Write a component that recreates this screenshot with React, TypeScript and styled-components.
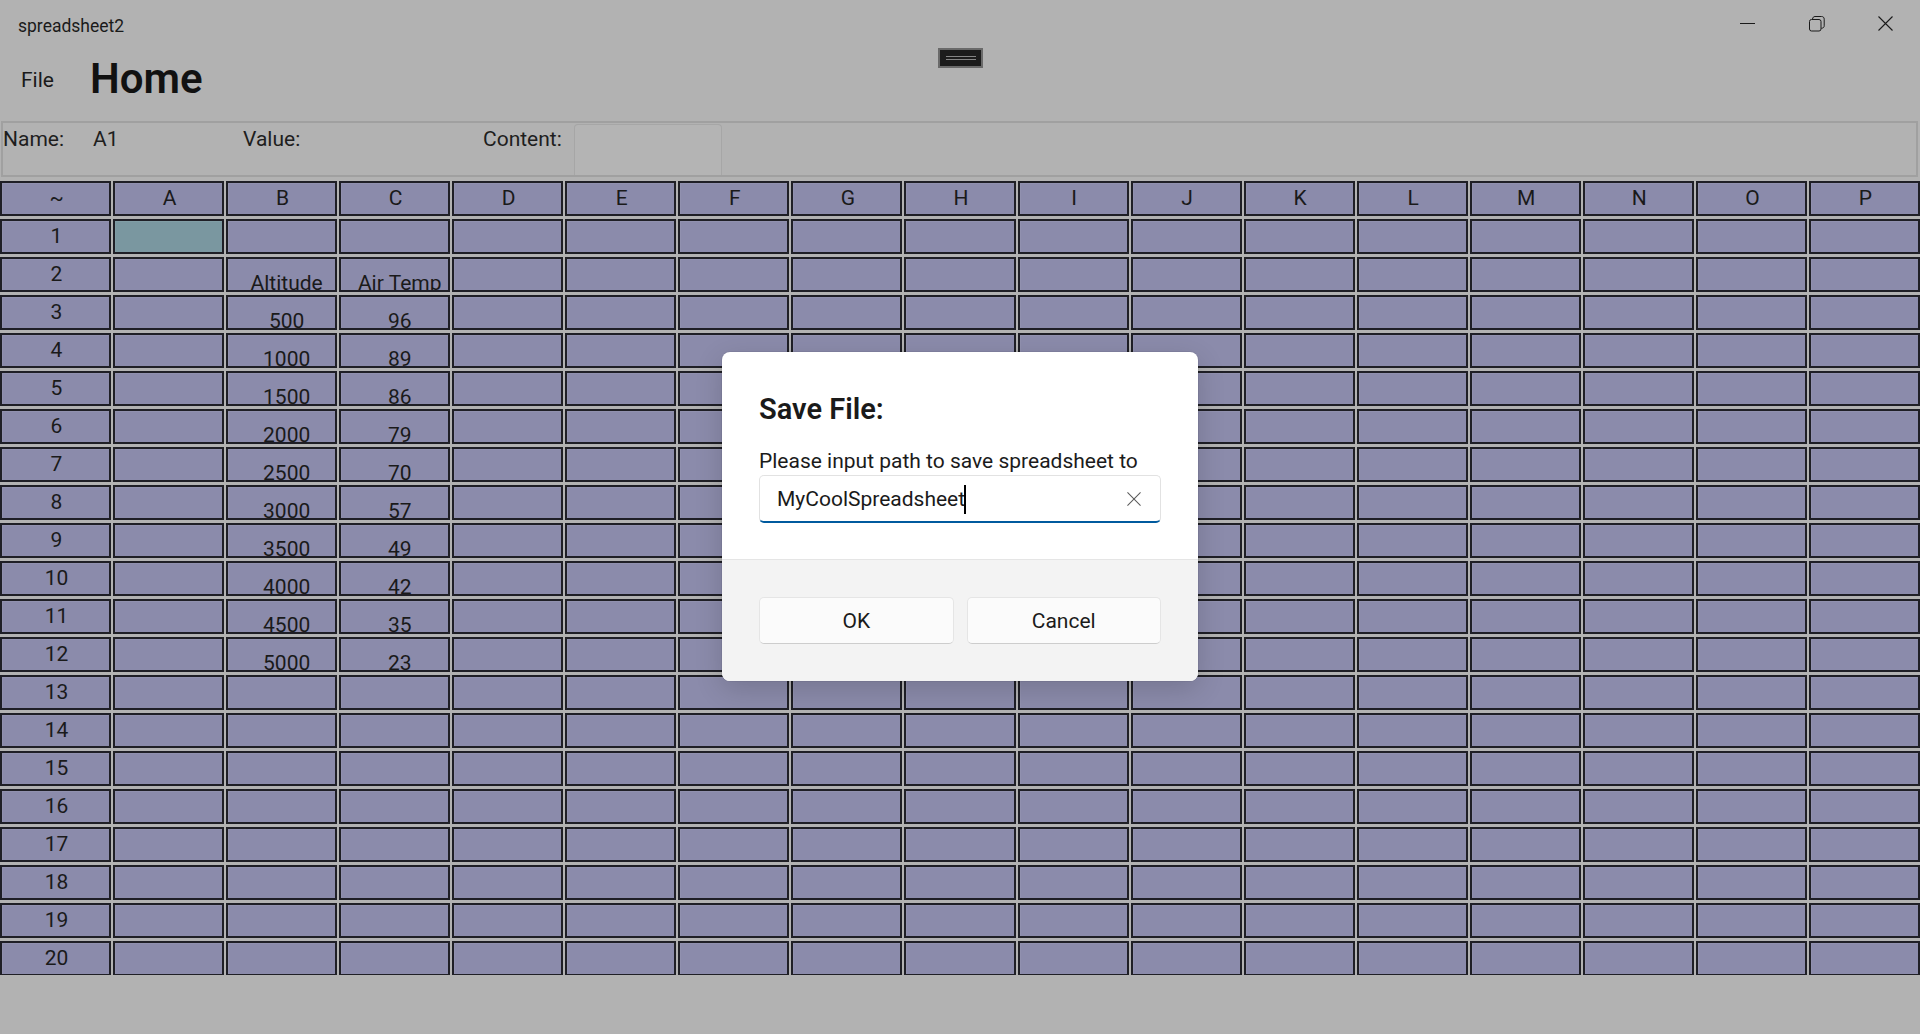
import React from "react";
import styled, { createGlobalStyle } from "styled-components";

const GlobalStyle = createGlobalStyle`
  html, body { margin: 0; padding: 0; background: #b2b2b2; }
  body {
    font-family: Roboto, "Noto Sans", "Liberation Sans", sans-serif;
    color: #1b1b1b;
    overflow: hidden;
  }
  * { box-sizing: border-box; }
`;

const Window = styled.div`
  position: relative;
  width: 1920px;
  height: 1034px;
  background: #b2b2b2;
  display: flex;
  flex-direction: column;
  overflow: hidden;
`;

const TitleBar = styled.div`
  height: 48px;
  display: flex;
  align-items: flex-start;
  justify-content: space-between;
  flex-shrink: 0;
`;

const AppTitle = styled.div`
  font-size: 17.5px;
  line-height: 24px;
  padding: 14px 0 0 18px;
  color: #1a1a1a;
`;

const Controls = styled.div`
  display: flex;
`;

const ControlButton = styled.div`
  width: 69px;
  height: 47px;
  display: flex;
  align-items: center;
  justify-content: center;
  color: #1a1a1a;
`;

const DragHandle = styled.div`
  position: absolute;
  top: 48px;
  left: 938px;
  width: 45px;
  height: 20px;
  background: #1c1c1c;
  border: 2px solid #6a6a6a;
  display: flex;
  flex-direction: column;
  align-items: center;
  justify-content: center;
  gap: 2px;
`;

const HandleLine = styled.div`
  width: 30px;
  height: 1px;
  background: #858585;
`;

const MenuRow = styled.div`
  height: 73px;
  display: flex;
  align-items: flex-start;
  flex-shrink: 0;
`;

const MenuItem = styled.div`
  width: 90px;
  font-size: 21px;
  line-height: 28px;
  padding: 18px 0 0 21px;
  color: #1a1a1a;
`;

const PageTitle = styled.h1`
  margin: 6px 0 0 0;
  font-size: 42px;
  line-height: 50px;
  font-weight: 600;
  color: #111;
`;

const InfoBar = styled.div`
  height: 56px;
  margin: 0 2px 0 1px;
  border: 2px solid #a0a0a0;
  display: flex;
  align-items: stretch;
  flex-shrink: 0;
`;

const InfoText = styled.div<{ $w: number }>`
  width: ${(p) => p.$w}px;
  font-size: 21px;
  line-height: 28px;
  padding-top: 2px;
  color: #1e1e1e;
  white-space: nowrap;
`;

const ContentBox = styled.div`
  width: 148px;
  margin-top: 1px;
  border: 1px solid #a6a6a6;
  border-bottom: none;
  border-radius: 4px 4px 0 0;
  background: #b4b4b4;
`;

const Grid = styled.div`
  margin-top: 4px;
  height: 794px;
  overflow: hidden;
  display: grid;
  grid-template-columns: repeat(17, 1fr);
  grid-auto-rows: 35px;
  column-gap: 2px;
  row-gap: 3px;
  flex-shrink: 0;
`;

const Cell = styled.div<{ $selected?: boolean }>`
  border: 2px solid #1f1f26;
  background: ${(p) => (p.$selected ? "#7a97a0" : "#8b8bab")};
  box-shadow: inset 1px 1px 0 rgba(255, 255, 255, 0.06);
  overflow: hidden;
`;

const HeadCell = styled(Cell)`
  display: flex;
  align-items: center;
  justify-content: center;
  padding: 0 0 2px 2px;
  font-size: 21px;
  line-height: 28px;
  color: #1a1a1a;
`;

const DataCell = styled(Cell)`
  font-size: 21px;
  line-height: 24px;
  padding: 12px 0 0 10px;
  text-align: center;
  white-space: nowrap;
  color: #1a1a1a;
`;

const Dialog = styled.div`
  position: absolute;
  left: 50%;
  top: 50%;
  margin-left: -238px;
  margin-top: -165px;
  width: 476px;
  border-radius: 8px;
  background: #ffffff;
  overflow: hidden;
  box-shadow: 0 8px 28px rgba(0, 0, 0, 0.16), 0 0 0 1px rgba(0, 0, 0, 0.05);
`;

const DialogBody = styled.div`
  height: 207px;
  padding: 38px 37px 0;
`;

const DialogTitle = styled.div`
  font-size: 29px;
  line-height: 38px;
  font-weight: 600;
  color: #1a1a1a;
`;

const DialogText = styled.div`
  margin-top: 20px;
  font-size: 21px;
  line-height: 26px;
  color: #1b1b1b;
`;

const TextBox = styled.div`
  height: 48px;
  margin-top: 1px;
  display: flex;
  align-items: center;
  padding: 1px 0 0 17px;
  border: 1px solid #e2e2e2;
  border-bottom: 2px solid #005a9e;
  border-radius: 5px;
  background: #ffffff;
`;

const InputText = styled.span`
  font-size: 21px;
  line-height: 28px;
  color: #1a1a1a;
  white-space: nowrap;
`;

const Caret = styled.span`
  width: 2px;
  height: 29px;
  margin-left: -1px;
  background: #000;
`;

const ClearButton = styled.div`
  margin-left: auto;
  width: 52px;
  height: 100%;
  display: flex;
  align-items: center;
  justify-content: center;
  margin-top: -1px;
  color: #5a5a5a;
`;

const DialogFooter = styled.div`
  border-top: 1px solid #e5e5e5;
  background: #f3f3f3;
  padding: 37px;
  display: flex;
  gap: 13px;
`;

const DialogButton = styled.div`
  flex: 1;
  height: 47px;
  display: flex;
  align-items: center;
  justify-content: center;
  background: #fbfbfb;
  border: 1px solid #e5e5e5;
  border-bottom-color: #cdcdcd;
  border-radius: 5px;
  font-size: 21px;
  color: #1b1b1b;
`;

const columns = ["~", "A", "B", "C", "D", "E", "F", "G", "H", "I", "J", "K", "L", "M", "N", "O", "P"];

const data: Record<string, string> = {
  B2: "Altitude",
  C2: "Air Temp",
};
const alt = [500, 1000, 1500, 2000, 2500, 3000, 3500, 4000, 4500, 5000];
const temp = [96, 89, 86, 79, 70, 57, 49, 42, 35, 23];
alt.forEach((a, i) => {
  data[`B${i + 3}`] = String(a);
  data[`C${i + 3}`] = String(temp[i]);
});

const MinimizeIcon = () => (
  <svg width="15" height="15" viewBox="0 0 15 15" fill="none">
    <path d="M0 7.5H15" stroke="currentColor" strokeWidth="1" />
  </svg>
);

const RestoreIcon = () => (
  <svg width="16" height="16" viewBox="0 0 16 16" fill="none">
    <rect x="0.5" y="3.5" width="11.5" height="11.5" rx="2" stroke="currentColor" strokeWidth="1" />
    <path
      d="M3.5 3.2 C3.7 1.4 4.6 0.5 6 0.5 H12.5 C14.2 0.5 15.2 1.5 15.2 3.2 V9.8 C15.2 11.2 14.4 12.1 12.3 12.3"
      stroke="currentColor"
      strokeWidth="1"
    />
  </svg>
);

const CloseIcon = ({ size = 15 }: { size?: number }) => (
  <svg width={size} height={size} viewBox="0 0 15 15" fill="none">
    <path d="M0.5 0.5L14.5 14.5M14.5 0.5L0.5 14.5" stroke="currentColor" strokeWidth="1.1" />
  </svg>
);

export default function App() {
  const cells: React.ReactNode[] = [];
  columns.forEach((c) => {
    cells.push(<HeadCell key={`h-${c}`}>{c}</HeadCell>);
  });
  for (let r = 1; r <= 21; r++) {
    cells.push(<HeadCell key={`r-${r}`}>{r}</HeadCell>);
    columns.slice(1).forEach((c) => {
      const id = `${c}${r}`;
      cells.push(
        <DataCell key={id} $selected={id === "A1"}>
          {data[id] ?? ""}
        </DataCell>
      );
    });
  }

  return (
    <>
      <GlobalStyle />
      <Window>
        <TitleBar>
          <AppTitle>spreadsheet2</AppTitle>
          <Controls>
            <ControlButton>
              <MinimizeIcon />
            </ControlButton>
            <ControlButton>
              <RestoreIcon />
            </ControlButton>
            <ControlButton>
              <CloseIcon />
            </ControlButton>
          </Controls>
        </TitleBar>

        <MenuRow>
          <MenuItem>File</MenuItem>
          <PageTitle>Home</PageTitle>
        </MenuRow>

        <InfoBar>
          <InfoText $w={90}>Name:</InfoText>
          <InfoText $w={150}>A1</InfoText>
          <InfoText $w={240}>Value:</InfoText>
          <InfoText $w={91}>Content:</InfoText>
          <ContentBox />
        </InfoBar>

        <Grid>{cells}</Grid>

        <DragHandle>
          <HandleLine />
          <HandleLine />
        </DragHandle>

        <Dialog>
          <DialogBody>
            <DialogTitle>Save File:</DialogTitle>
            <DialogText>Please input path to save spreadsheet to</DialogText>
            <TextBox>
              <InputText>MyCoolSpreadsheet</InputText>
              <Caret />
              <ClearButton>
                <CloseIcon size={14} />
              </ClearButton>
            </TextBox>
          </DialogBody>
          <DialogFooter>
            <DialogButton>OK</DialogButton>
            <DialogButton>Cancel</DialogButton>
          </DialogFooter>
        </Dialog>
      </Window>
    </>
  );
}
